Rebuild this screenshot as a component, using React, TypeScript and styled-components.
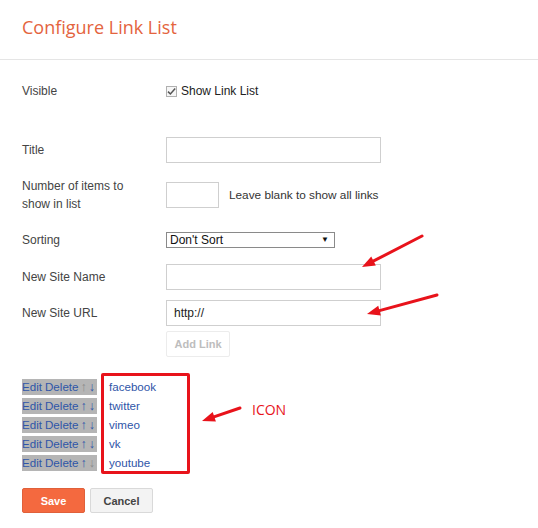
import React from "react";
import styled, { createGlobalStyle } from "styled-components";

const Global = createGlobalStyle`
  html, body { margin: 0; padding: 0; background: #fff; }
  body { font-family: "Liberation Sans", Arial, sans-serif; color: #444; }
  * { box-sizing: border-box; }
`;

const Page = styled.div`
  position: relative;
  width: 538px;
  height: 528px;
  overflow: hidden;
`;

const Header = styled.header`
  height: 60px;
  border-bottom: 1px solid #e5e5e5;
  padding: 15px 22px 0;
`;

const Title = styled.h1`
  margin: 0;
  font-family: "Open Sans", sans-serif;
  font-weight: 400;
  font-size: 18px;
  line-height: 24px;
  color: #e4643e;
`;

const Content = styled.div`
  padding: 0 22px;
`;

const Row = styled.div<{ $mt: number; $h: number }>`
  display: grid;
  grid-template-columns: 144px auto;
  align-items: center;
  margin-top: ${(p) => p.$mt}px;
  min-height: ${(p) => p.$h}px;
`;

const Label = styled.div`
  font-size: 12px;
  line-height: 18px;
  color: #444;
  max-width: 124px;
`;

const Field = styled.div`
  display: flex;
  align-items: center;
  gap: 10px;
  font-size: 11.8px;
  color: #333;
`;

const CheckLabel = styled.label`
  display: flex;
  align-items: center;
  gap: 4px;
  font-size: 12px;
  color: #222;
`;

const CheckBox = styled.span`
  width: 11px;
  height: 11px;
  border: 1px solid #b0b0b0;
  background: #f6f6f6;
  display: flex;
  align-items: center;
  justify-content: center;
`;

const TextInput = styled.input<{ $w: number }>`
  width: ${(p) => p.$w}px;
  height: 26px;
  border: 1px solid #cfcfcf;
  padding: 0 7px;
  font-family: "Liberation Sans", Arial, sans-serif;
  font-size: 12px;
  color: #222;
  outline: none;
  margin: 0;
`;

const SelectWrap = styled.div`
  position: relative;
  width: 169px;
  height: 16px;
`;

const Select = styled.select`
  appearance: none;
  width: 100%;
  height: 16px;
  border: 1px solid #8a8a8a;
  background: #fff;
  padding: 0 0 0 3px;
  font-family: "Liberation Sans", Arial, sans-serif;
  font-size: 12px;
  line-height: 14px;
  color: #111;
  border-radius: 0;
  margin: 0;
`;

const Caret = styled.span`
  position: absolute;
  right: 6px;
  top: 2px;
  font-size: 8px;
  line-height: 12px;
  color: #111;
  pointer-events: none;
`;

const GhostButton = styled.button`
  width: 64px;
  height: 26px;
  border: 1px solid #ececec;
  background: #fff;
  color: #bdbdbd;
  font-family: "Liberation Sans", Arial, sans-serif;
  font-weight: 700;
  font-size: 11px;
  padding: 0;
  border-radius: 2px;
`;

const List = styled.div`
  position: relative;
  margin-top: 20px;
`;

const Item = styled.div`
  display: flex;
  align-items: center;
  height: 19px;
`;

const Actions = styled.span`
  display: inline-flex;
  align-items: center;
  gap: 3px;
  width: 75px;
  height: 16px;
  line-height: 16px;
  background: #b5b5b5;
  font-size: 11.6px;
  color: #2f55a8;
  white-space: nowrap;
`;

const Arrow = styled.span<{ $off: boolean }>`
  font-size: 12.5px;
  line-height: 16px;
  margin-left: -1px;
  color: ${(p) => (p.$off ? "#8c8c8c" : "#2f55a8")};
`;

const LinkName = styled.a`
  margin-left: 12px;
  font-size: 11.6px;
  color: #2f55a8;
  text-decoration: none;
`;

const Callout = styled.div`
  position: absolute;
  left: 79px;
  top: -4px;
  width: 89px;
  height: 101px;
  border: 3px solid #e8131b;
  border-radius: 2px;
  pointer-events: none;
`;

const Buttons = styled.div`
  display: flex;
  gap: 5px;
  margin-top: 16px;
`;

const Button = styled.button<{ $primary?: boolean }>`
  width: 63px;
  height: 25px;
  border-radius: 2px;
  font-family: "Liberation Sans", Arial, sans-serif;
  font-weight: 700;
  font-size: 11px;
  padding: 0;
  border: 1px solid ${(p) => (p.$primary ? "#e0603a" : "#d9d9d9")};
  background: ${(p) => (p.$primary ? "#f4693f" : "#f3f3f3")};
  color: ${(p) => (p.$primary ? "#fff" : "#444")};
`;

const Overlay = styled.svg`
  position: absolute;
  left: 0;
  top: 0;
  pointer-events: none;
`;

const Note = styled.span`
  position: absolute;
  left: 252px;
  top: 400px;
  font-family: "Open Sans", sans-serif;
  font-size: 14px;
  line-height: 20px;
  color: #e8131b;
`;

function ArrowMark({ x1, y1, x2, y2 }: { x1: number; y1: number; x2: number; y2: number }) {
  const dx = x2 - x1;
  const dy = y2 - y1;
  const len = Math.hypot(dx, dy);
  const ux = dx / len;
  const uy = dy / len;
  const hl = 13;
  const hw = 5;
  const bx = x2 - ux * hl;
  const by = y2 - uy * hl;
  const px = -uy * hw;
  const py = ux * hw;
  return (
    <g>
      <line x1={x1} y1={y1} x2={bx + ux * 2} y2={by + uy * 2} stroke="#e8131b" strokeWidth={3} strokeLinecap="round" />
      <polygon points={`${x2},${y2} ${bx + px},${by + py} ${bx - px},${by - py}`} fill="#e8131b" />
    </g>
  );
}

const links = ["facebook", "twitter", "vimeo", "vk", "youtube"];

export default function App() {
  return (
    <Page>
      <Global />
      <Header>
        <Title>Configure Link List</Title>
      </Header>
      <Content>
        <Row $mt={22} $h={18}>
          <Label>Visible</Label>
          <Field>
            <CheckLabel>
              <CheckBox>
                <svg width="9" height="9" viewBox="0 0 9 9">
                  <path d="M1 4.6 L3.4 7 L8.2 1.6" fill="none" stroke="#555" strokeWidth="1.5" />
                </svg>
              </CheckBox>
              Show Link List
            </CheckLabel>
          </Field>
        </Row>
        <Row $mt={37} $h={26}>
          <Label>Title</Label>
          <Field>
            <TextInput $w={215} />
          </Field>
        </Row>
        <Row $mt={14} $h={36}>
          <Label>Number of items to show in list</Label>
          <Field>
            <TextInput $w={53} />
            <span>Leave blank to show all links</span>
          </Field>
        </Row>
        <Row $mt={18} $h={18}>
          <Label>Sorting</Label>
          <Field>
            <SelectWrap>
              <Select defaultValue="none">
                <option value="none">Don't Sort</option>
              </Select>
              <Caret>▼</Caret>
            </SelectWrap>
          </Field>
        </Row>
        <Row $mt={15} $h={26}>
          <Label>New Site Name</Label>
          <Field>
            <TextInput $w={215} />
          </Field>
        </Row>
        <Row $mt={10} $h={26}>
          <Label>New Site URL</Label>
          <Field>
            <TextInput $w={215} defaultValue="http://" />
          </Field>
        </Row>
        <Row $mt={5} $h={26}>
          <span />
          <Field>
            <GhostButton>Add Link</GhostButton>
          </Field>
        </Row>
        <List>
          {links.map((name, i) => (
            <Item key={name}>
              <Actions>
                <span>Edit</span>
                <span>Delete</span>
                <Arrow $off={i === 0}>↑</Arrow>
                <Arrow $off={i === links.length - 1}>↓</Arrow>
              </Actions>
              <LinkName href="#">{name}</LinkName>
            </Item>
          ))}
          <Callout />
        </List>
        <Buttons>
          <Button $primary>Save</Button>
          <Button>Cancel</Button>
        </Buttons>
      </Content>
      <Overlay width={538} height={528}>
        <ArrowMark x1={422} y1={236} x2={362} y2={267} />
        <ArrowMark x1={437} y1={295} x2={367} y2={314} />
        <ArrowMark x1={240} y1={408} x2={202} y2={421} />
      </Overlay>
      <Note>ICON</Note>
    </Page>
  );
}
